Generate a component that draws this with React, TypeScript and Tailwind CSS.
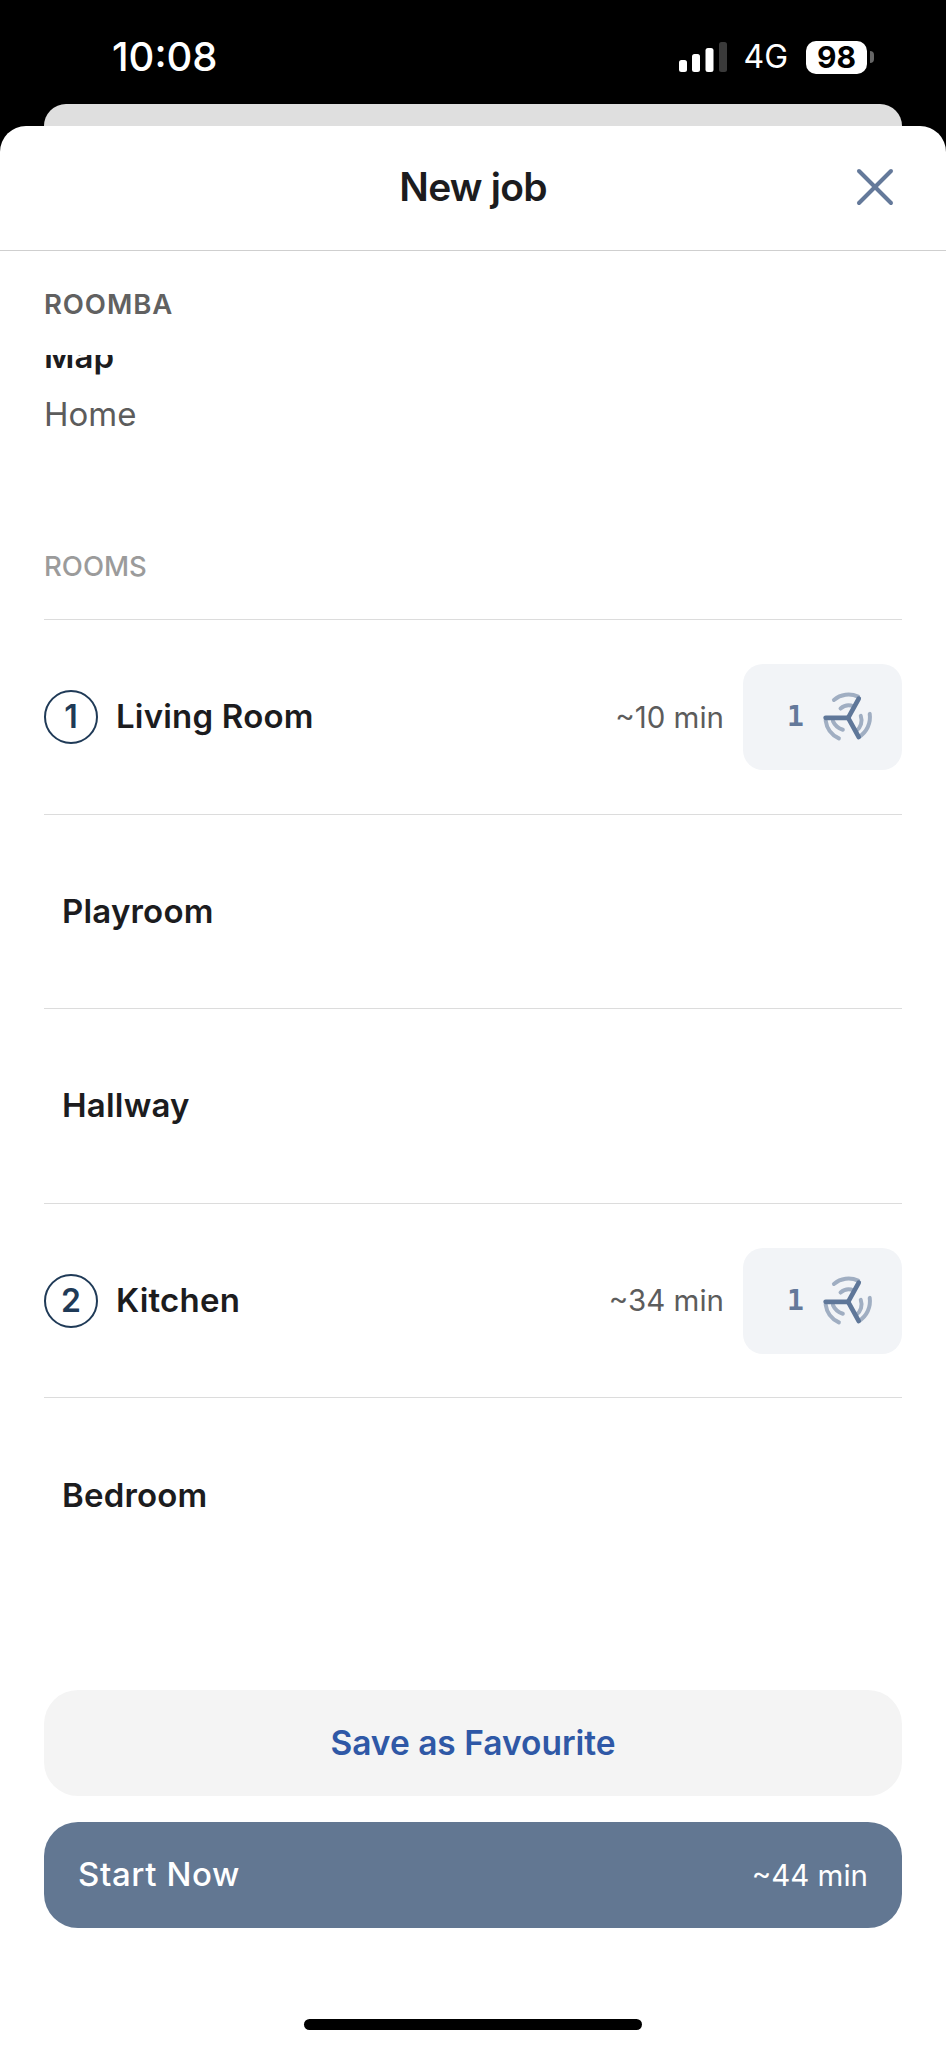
import { X } from 'lucide-react'

// ============================================
// NEW JOB SHEET
// Status bar, modal header, room list, actions
// ============================================

const rooms = [
  { name: 'Living Room', order: 1, time: '~10 min' },
  { name: 'Playroom' },
  { name: 'Hallway' },
  { name: 'Kitchen', order: 2, time: '~34 min' },
  { name: 'Bedroom' },
]

function SignalBars() {
  return (
    <svg width="48" height="30" viewBox="0 0 48 30" className="block">
      <rect x="0" y="18" width="8" height="12" rx="2.5" fill="#fff" />
      <rect x="13" y="12" width="8" height="18" rx="2.5" fill="#fff" />
      <rect x="26.5" y="6" width="8" height="24" rx="2.5" fill="#fff" />
      <rect x="40" y="0" width="8" height="30" rx="2.5" fill="#3a3a3a" />
    </svg>
  )
}

function FanIcon() {
  return (
    <svg width="58" height="58" viewBox="300 110 175 175" fill="none" strokeLinecap="round" className="block">
      <g stroke="#a0aec2" strokeWidth="12">
        <path d="M345 146 A70 70 0 0 1 418 136" />
        <path d="M365 172 A38 38 0 0 1 405 166" />
        <path d="M453 188 A70 70 0 0 1 420 258" />
        <path d="M426 194 A40 40 0 0 1 412 240" />
        <path d="M320 208 A70 70 0 0 0 360 262" />
        <path d="M342 210 A48 48 0 0 0 372 236" />
      </g>
      <g stroke="#5f7799" strokeWidth="14">
        <path d="M388 200 L420 142" />
        <path d="M388 200 L320 200" />
        <path d="M388 200 L420 258" />
      </g>
    </svg>
  )
}

function RoomRow({ name, order, time }: { name: string; order?: number; time?: string }) {
  return (
    <div className="h-[194.6px] border-b border-[#dcdcdc] flex items-center last:border-b-0">
      {order ? (
        <>
          <div className="w-[54px] h-[54px] rounded-full border-2 border-[#1f3a57] flex items-center justify-center text-[32px] font-semibold text-[#1f3a57]">
            {order}
          </div>
          <span className="ml-[18px] text-[33px] font-semibold tracking-[0.2px] text-[#1c1c1e]">{name}</span>
          <span className="ml-auto mr-[19px] text-[29.5px] text-[#5c5c5c]">{time}</span>
          <div className="w-[159px] h-[106px] rounded-[20px] bg-[#f2f4f7] flex items-center pl-[44px] gap-[15px]">
            <span className="font-['DejaVu_Sans_Mono'] text-[28px] font-bold text-[#64799a]">1</span>
            <FanIcon />
          </div>
        </>
      ) : (
        <span className="ml-[18px] text-[33px] font-semibold tracking-[0.2px] text-[#1c1c1e]">{name}</span>
      )}
    </div>
  )
}

export default function App() {
  return (
    <div className="w-[946px] h-[2048px] bg-black flex flex-col overflow-hidden font-['Inter',sans-serif]">
      {/* Status bar */}
      <div className="h-[104px] shrink-0 flex items-start justify-between pl-[112px] pr-[72px] pt-[34px] text-white">
        <span className="text-[40px] leading-[46px] font-medium">10:08</span>
        <div className="flex items-center pt-[6px]">
          <SignalBars />
          <span className="ml-[16px] text-[32px] leading-[34px]">4G</span>
          <div className="ml-[18px] w-[61px] h-[33px] rounded-[10px] bg-white flex items-center justify-center text-[30px] font-bold text-black">
            98
          </div>
          <div className="ml-[3px] w-[4px] h-[12px] rounded-r-full bg-[#666]" />
        </div>
      </div>

      {/* Card behind the sheet */}
      <div className="h-[22px] shrink-0 mx-[44px] rounded-t-[22px] bg-[#dfdfdf]" />

      <div className="flex-1 bg-white rounded-t-[26px] flex flex-col">
        {/* Header */}
        <div className="h-[125px] shrink-0 border-b border-[#cfcfcf] flex items-center justify-center relative">
          <span className="text-[39px] font-semibold text-[#1c1c1e] tracking-[-0.8px] -mt-[2px]">New job</span>
          <X className="absolute right-[39px] top-[29px] text-[#64799a]" size={64} strokeWidth={1.5} />
        </div>

        <div className="px-[44px] flex-1 flex flex-col">
          <div className="mt-[37px] text-[27.5px] leading-[32px] font-semibold text-[#616161] tracking-[0.9px]">ROOMBA</div>

          {/* Map row, scrolled under the section title */}
          <div className="mt-[35px] h-[22px] overflow-hidden">
            <div className="-mt-[18px] text-[33px] leading-[38px] font-semibold text-[#1c1c1e]">Map</div>
          </div>
          <div className="mt-[18px] text-[33px] leading-[38px] text-[#5c5c5c]">Home</div>

          <div className="mt-[117px] text-[27.5px] leading-[32px] font-medium text-[#9b9b9b]">ROOMS</div>

          <div className="mt-[37px] border-t border-[#dcdcdc]">
            {rooms.map((room) => (
              <RoomRow key={room.name} {...room} />
            ))}
          </div>

          {/* Actions */}
          <div className="mt-auto flex flex-col gap-[26px]">
            <button className="h-[106px] rounded-[34px] bg-[#f4f4f4] text-[33.5px] font-semibold text-[#2f58a6]">
              Save as Favourite
            </button>
            <button className="h-[106px] rounded-[34px] bg-[#627792] text-white flex items-center justify-between px-[34px]">
              <span className="text-[33px] font-medium tracking-[0.6px]">Start Now</span>
              <span className="text-[29.5px]">~44 min</span>
            </button>
          </div>

          <div className="mt-[91px] mb-[18px] mx-auto w-[338px] h-[11px] rounded-full bg-black" />
        </div>
      </div>
    </div>
  )
}
